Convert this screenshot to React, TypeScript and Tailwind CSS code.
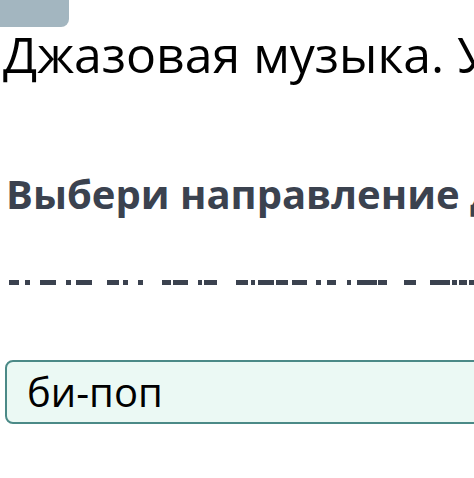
import React from 'react';

// redacted text line: dash blocks as [start, end] x positions
const dashes: [number, number][] = [
  [9, 19], [25, 30], [40, 56], [66, 71], [76, 92], [107, 119], [123, 128], [138, 143],
  [162, 171], [173, 188], [198, 202], [204, 217], [236, 248], [251, 255], [258, 274],
  [276, 288], [292, 307], [316, 321], [327, 336], [347, 351], [357, 377], [378, 387],
  [404, 416], [430, 450], [452, 457], [459, 467], [469, 480],
];

export default function App() {
  return (
    <div className="w-[474px] h-[478px] overflow-hidden bg-white relative" style={{ fontFamily: '"Open Sans", "Noto Sans", sans-serif' }}>
      {/* back badge */}
      <div className="w-[69px] h-[27px] bg-[#a3b6c0] rounded-br-[8px]"></div>
      <div className="pl-[5px]">
        <h1 className="whitespace-nowrap text-[50px] leading-[50px] text-black ml-[-2px] mt-[2px]">
          Джазовая музыка. Урок 2
        </h1>
        <h2 className="whitespace-nowrap text-[40px] leading-[40px] font-bold text-[#3b424f] mt-[95px] pl-[1px]">
          Выбери направление джаза
        </h2>
        <div className="flex mt-[66px] h-[5px]">
          {dashes.map(([s, e], i) => (
            <span
              key={i}
              className="h-[5px] bg-[#3b424f] shrink-0"
              style={{ marginLeft: s - (i === 0 ? 5 : dashes[i - 1][1]), width: e - s }}
            ></span>
          ))}
        </div>
        <div className="mt-[75px] w-[490px] h-[64px] border-2 border-[#4b8a87] bg-[#ebf9f4] rounded-[8px] flex items-center pl-[20px]">
          <span className="text-[40px] text-black leading-[40px]">би-поп</span>
        </div>
      </div>
    </div>
  );
}
